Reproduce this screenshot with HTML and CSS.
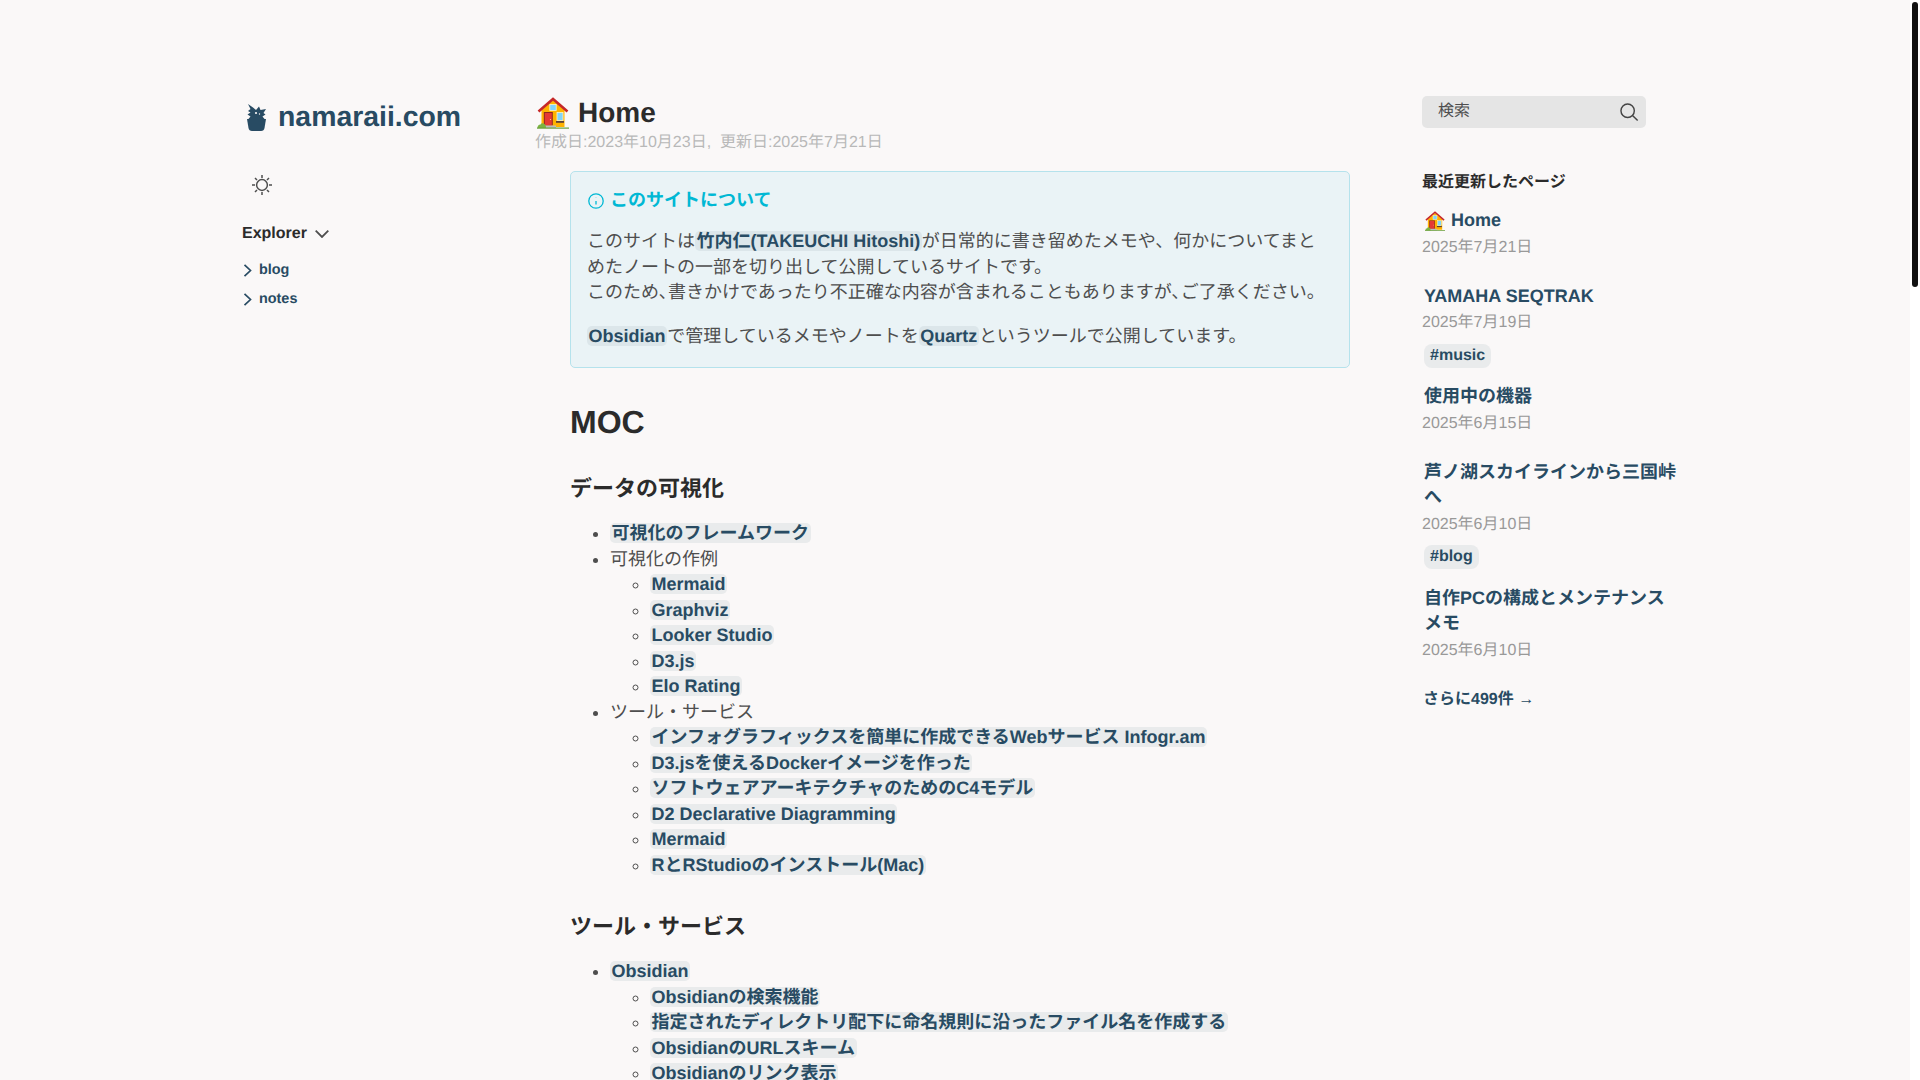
FILE: index.html
```html
<!DOCTYPE html>
<html lang="ja">
<head>
<meta charset="utf-8">
<title>Home</title>
<link rel="stylesheet" href="styles.css">
</head>
<body>
<svg class="defs" width="0" height="0" aria-hidden="true">
  <symbol id="house" viewBox="0 0 32 32">
    <path d="M4.500 30V13L16 3l11.500 10v17z" fill="#ffb300"/>
    <path d="M1.500 14.500L16 2l14.500 12.500" fill="none" stroke="#c62828" stroke-width="2.600"/>
    <rect x="12.800" y="7.500" width="6.400" height="6" fill="#81d4fa" stroke="#fff3c4" stroke-width=".8"/>
    <rect x="6.800" y="15" width="9" height="13.500" fill="#8d2a1e"/>
    <rect x="7.800" y="16" width="7" height="12.500" fill="#e53935"/>
    <circle cx="13.500" cy="22.500" r=".6" fill="#ffe082"/>
    <rect x="20" y="15.500" width="6" height="8" fill="#81d4fa" stroke="#fff3c4" stroke-width=".8"/>
    <rect x="19" y="24" width="8" height="1.800" fill="#5d4037"/>
    <rect x="7" y="28.500" width="12" height="2.500" fill="#bdbdbd"/>
    <path d="M.5 31q0-3.500 3-3.500 1-2 3-1 2.500.5 2.500 4.500z" fill="#7cb342"/>
    <rect x="0" y="30.500" width="32" height="1.200" fill="#689f38"/>
  </symbol>
</svg>
<div class="page">
  <aside class="left">
    <h2 class="site-title">
      <svg class="logo" viewBox="0 0 19 27" aria-hidden="true"><path d="M1 0l5 3.500L9 6l3-3.500L13.500 6 19 5l-2.500 4 2 1.500-3 2L18 15.500H1l2.500-3-3-2 3-2L1 7l2.500-2z"/><path d="M0 15h19l-1.500 9q-.5 3-3.500 3H5q-3 0-3.500-3z"/><circle cx="9" cy="9" r="1.100" class="logo-hole"/><circle cx="12.500" cy="10" r=".7" class="logo-hole"/></svg>
      <a href="#" class="site-name">namaraii.com</a>
    </h2>
    <button class="theme" aria-label="theme">
      <svg viewBox="0 0 20 20" width="20" height="20" aria-hidden="true"><circle cx="10" cy="10" r="5.400"/><path d="M10 0v3M10 17v3M0 10h3M17 10h3M3 3l2 2M15 15l2 2M3 17l2-2M15 5l2-2"/></svg>
    </button>
    <div class="explorer-head">
      <span>Explorer</span>
      <svg viewBox="0 0 14 8" width="14" height="8" aria-hidden="true"><path d="M.7.7L7 7 13.300.7"/></svg>
    </div>
    <ul class="tree">
      <li><svg viewBox="0 0 9 13" width="9" height="13" aria-hidden="true"><path d="M1.500.8L7.500 6.500 1.500 12.200"/></svg><a href="#">blog</a></li>
      <li><svg viewBox="0 0 9 13" width="9" height="13" aria-hidden="true"><path d="M1.500.8L7.500 6.500 1.500 12.200"/></svg><a href="#">notes</a></li>
    </ul>
  </aside>

  <main class="center">
    <h1 class="page-title"><svg class="emoji-lg" role="img" aria-label="🏠"><use href="#house"/></svg><span>Home</span></h1>
    <p class="meta">作成日:2023年10月23日,&nbsp; 更新日:2025年7月21日</p>
    <article class="article">
      <div class="callout">
        <div class="callout-title">
          <svg viewBox="0 0 16 16" width="16" height="16" aria-hidden="true"><circle cx="8" cy="8" r="7.200"/><path d="M8 11.500V8M8 4.800v.1"/></svg>
          <span>このサイトについて</span>
        </div>
        <p>このサイトは<a class="lk" href="#">竹内仁(TAKEUCHI Hitoshi)</a>が日常的に書き留めたメモや、何かについてまとめたノートの一部を切り出して公開しているサイトです。<br>このため､書きかけであったり不正確な内容が含まれることもありますが､ご了承ください。</p>
        <p><a class="lk" href="#">Obsidian</a>で管理しているメモやノートを<a class="lk" href="#">Quartz</a>というツールで公開しています。</p>
      </div>
      <h1 class="moc">MOC</h1>
      <h2 class="sec sec-first">データの可視化</h2>
      <ul>
        <li><a class="lk" href="#">可視化のフレームワーク</a></li>
        <li>可視化の作例
          <ul>
            <li><a class="lk" href="#">Mermaid</a></li>
            <li><a class="lk" href="#">Graphviz</a></li>
            <li><a class="lk" href="#">Looker Studio</a></li>
            <li><a class="lk" href="#">D3.js</a></li>
            <li><a class="lk" href="#">Elo Rating</a></li>
          </ul>
        </li>
        <li>ツール・サービス
          <ul>
            <li><a class="lk" href="#">インフォグラフィックスを簡単に作成できるWebサービス Infogr.am</a></li>
            <li><a class="lk" href="#">D3.jsを使えるDockerイメージを作った</a></li>
            <li><a class="lk" href="#">ソフトウェアアーキテクチャのためのC4モデル</a></li>
            <li><a class="lk" href="#">D2 Declarative Diagramming</a></li>
            <li><a class="lk" href="#">Mermaid</a></li>
            <li><a class="lk" href="#">RとRStudioのインストール(Mac)</a></li>
          </ul>
        </li>
      </ul>
      <h2 class="sec">ツール・サービス</h2>
      <ul>
        <li><a class="lk" href="#">Obsidian</a>
          <ul>
            <li><a class="lk" href="#">Obsidianの検索機能</a></li>
            <li><a class="lk" href="#">指定されたディレクトリ配下に命名規則に沿ったファイル名を作成する</a></li>
            <li><a class="lk" href="#">ObsidianのURLスキーム</a></li>
            <li><a class="lk" href="#">Obsidianのリンク表示</a></li>
          </ul>
        </li>
      </ul>
    </article>
  </main>

  <aside class="right">
    <div class="search">
      <span>検索</span>
      <svg viewBox="0 0 19.900 19.700" width="19" height="19" aria-hidden="true"><path d="M18.500 18.300l-5.400-5.400"/><circle cx="8" cy="8" r="7"/></svg>
    </div>
    <h3 class="recent-head">最近更新したページ</h3>
    <ul class="recent">
      <li><a class="rt rt-emoji" href="#"><svg class="emoji-sm" role="img" aria-label="🏠"><use href="#house"/></svg><span>Home</span></a><div class="rd">2025年7月21日</div></li>
      <li class="has-tag"><a class="rt" href="#">YAMAHA SEQTRAK</a><div class="rd">2025年7月19日</div><a class="tag" href="#">#music</a></li>
      <li><a class="rt" href="#">使用中の機器</a><div class="rd">2025年6月15日</div></li>
      <li class="has-tag"><a class="rt" href="#">芦ノ湖スカイラインから三国峠へ</a><div class="rd">2025年6月10日</div><a class="tag" href="#">#blog</a></li>
      <li><a class="rt" href="#">自作PCの構成とメンテナンスメモ</a><div class="rd">2025年6月10日</div></li>
    </ul>
    <a class="more" href="#">さらに499件 →</a>
  </aside>
</div>
<div class="scrolltrack"><div class="scrollthumb"></div></div>
</body>
</html>
```

FILE: styles.css
```css
html, body { margin: 0; height: 100%; overflow: hidden; }
html { text-rendering: geometricPrecision; }
body {
  display: flex;
  background: #fff;
  color: #4e4e4e;
  font-family: "Liberation Sans", "Noto Sans CJK JP", sans-serif;
  font-size: 18px;
  line-height: 25.5px;
}
a { color: #284b63; text-decoration: none; font-weight: 700; }
ul { margin: 0; padding: 0 0 0 40px; }
.defs { position: absolute; }

.page {
  flex: 1;
  height: 1080px;
  overflow: hidden;
  background: #faf8f8;
  display: flex;
  padding: 96px 0 0 242px;
  box-sizing: border-box;
}
.scrolltrack { width: 10px; padding: 2px 2px 0; box-sizing: border-box; background: #fff; }
.scrollthumb { width: 6px; height: 285px; border-radius: 3px; background: #111; }

.left { width: 293px; flex: none; }
.site-title { display: flex; align-items: center; margin: 1.500px 0 0; height: 40px; font-size: 28.400px; padding-left: 5px; }
.logo { width: 19px; height: 27px; fill: #284b63; margin-right: 12px; flex: none; }
.logo-hole { fill: #faf8f8; }
.theme { display: block; margin: 37.500px 0 0 10px; padding: 0; border: 0; background: none; width: 20px; height: 20px; }
.theme svg { display: block; fill: none; stroke: #4e4e4e; stroke-width: 1.500; }
.explorer-head { display: flex; align-items: center; gap: 8px; margin-top: 26px; font-size: 16px; font-weight: 700; color: #2b2b2b; height: 26px; }
.explorer-head svg { fill: none; stroke: #4e4e4e; stroke-width: 1.800; }
.tree { list-style: none; padding: 0; margin-top: 8.500px; font-size: 14.400px; line-height: 29px; }
.tree li { display: flex; align-items: center; padding-left: 1px; }
.tree svg { fill: none; stroke: #284b63; stroke-width: 1.700; margin-right: 7px; }

.center { width: 887px; flex: none; }
.page-title { display: flex; align-items: center; margin: 0; font-size: 28px; line-height: 33px; height: 33px; color: #2b2b2b; font-weight: 700; }
.emoji-lg { width: 32px; height: 32px; margin: 0 9px 0 2px; flex: none; }
.meta { margin: 2px 0 0; font-size: 16px; line-height: 24px; color: #b8b8b8; }
.article { margin: 16px 0 0 35px; width: 780px; }

.callout {
  box-sizing: border-box;
  height: 197px;
  padding: 16px 16px 0;
  background: #eaf3f6;
  border: 1px solid #b5e2ec;
  border-radius: 5px;
}
.callout-title { display: flex; align-items: center; gap: 6px; padding-left: 1px; color: #00b8d4; font-weight: 700; }
.callout-title svg { fill: none; stroke: #00b8d4; stroke-width: 1.300; flex: none; }
.callout p { margin: 15.500px 0 0; }
.callout p + p { margin-top: 18.500px; }
.lk { background: rgba(143, 159, 169, 0.15); padding: 0 1.600px; border-radius: 5px; }

.moc { margin: 34px 0 0; font-size: 32px; line-height: 40px; color: #2b2b2b; font-weight: 700; }
.sec { margin: 33px 0 16px; font-size: 22px; line-height: 32px; color: #2b2b2b; font-weight: 700; }
.sec-first { margin-top: 31px; }

.right { width: 258px; flex: none; }
.search { display: flex; align-items: center; justify-content: space-between; height: 32px; width: 224px; box-sizing: border-box; padding: 0 7px 0 16px; background: #e5e5e5; border-radius: 5px; font-size: 16px; }
.search svg { fill: none; stroke: #444; stroke-width: 1.500; }
.recent-head { margin: 42px 0 0; font-size: 16px; line-height: 26px; font-weight: 700; color: #2b2b2b; }
.recent { list-style: none; padding: 0; margin-top: 12px; }
.recent li { margin-bottom: 23px; }
.recent li.has-tag { margin-bottom: 16.500px; }
.rt { display: block; padding-left: 2px; }
.rt-emoji { display: flex; align-items: center; gap: 6px; padding-left: 3px; height: 25.500px; }
.emoji-sm { width: 20px; height: 20px; flex: none; }
.rd { margin-top: 1px; font-size: 16px; line-height: 26px; color: #999; }
.tag { display: inline-block; margin: 7.500px 0 0 2px; padding: 0 6px; font-size: 16px; line-height: 24px; background: rgba(143, 159, 169, 0.15); border-radius: 8px; }
.more { display: block; font-size: 16px; padding-left: 1px; }
```
